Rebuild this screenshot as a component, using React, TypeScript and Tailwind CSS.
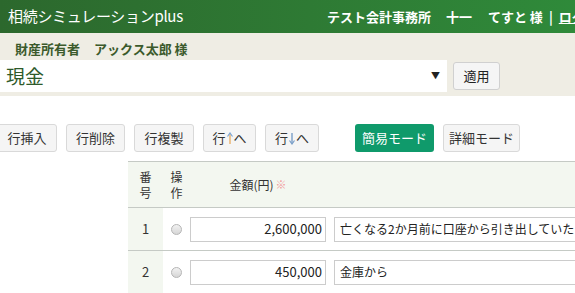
import React from 'react'

const jp = { fontFamily: '"Noto Sans CJK JP", "Noto Sans", sans-serif' }

function ToolButton({ label, w }: { label: React.ReactNode; w: string }) {
  return (
    <button
      className={`h-[28px] ${w} shrink-0 rounded-[3px] border border-[#d9d9d9] bg-[#f5f5f5] text-[13px] text-[#333] flex items-center justify-center`}
    >
      {label}
    </button>
  )
}

function Arrow({ down }: { down?: boolean }) {
  return (
    <svg width="6" height="13" viewBox="0 0 6 13" className="mx-[1px]">
      {down ? (
        <>
          <line x1="3" y1="1" x2="3" y2="11" stroke="#7a9ec8" strokeWidth="1.4" />
          <path d="M0.5 8.5 L3 12 L5.5 8.5" fill="none" stroke="#7a9ec8" strokeWidth="1.2" />
        </>
      ) : (
        <>
          <line x1="3" y1="2" x2="3" y2="12" stroke="#e8b06a" strokeWidth="1.4" />
          <path d="M0.5 4.5 L3 1 L5.5 4.5" fill="none" stroke="#7aa6d8" strokeWidth="1.2" />
        </>
      )}
    </svg>
  )
}

export default function App() {
  const rows = [
    { no: 1, amount: '2,600,000', memo: '亡くなる2か月前に口座から引き出していた' },
    { no: 2, amount: '450,000', memo: '金庫から' },
  ]

  return (
    <div className="w-[575px] h-[293px] overflow-hidden bg-white" style={jp}>
      {/* header */}
      <div className="h-[33px] bg-gradient-to-r from-[#2c682d] to-[#2f8a3a] flex items-center whitespace-nowrap text-white">
        <span className="ml-[8px] text-[15px] tracking-[-0.3px]">相続シミュレーションplus</span>
        <div className="ml-[144px] flex items-center text-[13px] font-bold">
          <span>テスト会計事務所</span>
          <span className="ml-[15px]">十一</span>
          <span className="ml-[16px]">てすと 様</span>
          <span className="ml-[6px]">|</span>
          <span className="ml-[6px] underline">ログアウト</span>
        </div>
      </div>

      {/* owner + select */}
      <div className="bg-[#efede4] pt-[5px] pb-[4px]">
        <div className="h-[21px] flex items-center pl-[15px] text-[13px] font-bold text-[#3b5a2c]">
          <span>財産所有者</span>
          <span className="ml-[14px]">アックス太郎 様</span>
        </div>
        <div className="mt-[1px] flex items-center">
          <div className="w-[447px] h-[32px] bg-white flex items-center pl-[6px] pr-[7px]">
            <span className="text-[19px] text-[#2e5a2a]">現金</span>
            <span className="ml-auto text-[9px] text-[#222]">▼</span>
          </div>
          <button className="ml-[6px] h-[28px] w-[47px] rounded-[3px] border border-[#d0d0d0] bg-[#f5f5f5] text-[13px] text-[#222]">
            適用
          </button>
        </div>
      </div>

      {/* toolbar */}
      <div className="mt-[28px] flex items-center ml-[-3px] gap-[9px]">
        <ToolButton w="w-[60px]" label="行挿入" />
        <ToolButton w="w-[59px]" label="行削除" />
        <ToolButton w="w-[60px]" label="行複製" />
        <ToolButton w="w-[53px]" label={<>行<Arrow />へ</>} />
        <ToolButton w="w-[54px]" label={<>行<Arrow down />へ</>} />
        <button className="ml-[27px] h-[28px] w-[79px] shrink-0 rounded-[3px] bg-[#0f9a6b] text-[13px] text-white">
          簡易モード
        </button>
        <ToolButton w="w-[77px]" label="詳細モード" />
      </div>

      {/* table */}
      <div className="mt-[9px] ml-[128px] w-[447px] border-t border-[#c5cac5]">
        <div className="h-[46px] bg-[#f3f7f0] flex items-center text-[12px] text-[#333] border-b border-[#c5cac5]">
          <div className="w-[35px] shrink-0 flex flex-col items-center leading-[16px]">
            <span>番</span>
            <span>号</span>
          </div>
          <div className="w-[27px] shrink-0 flex flex-col items-center leading-[16px]">
            <span>操</span>
            <span>作</span>
          </div>
          <div className="w-[136px] shrink-0 flex items-center justify-center">
            金額(円)<span className="ml-[2px] text-[#f29a9a] text-[11px]">※</span>
          </div>
        </div>
        {rows.map((r) => (
          <div key={r.no} className="h-[43px] flex items-center border-b border-[#c5cac5]">
            <div className="w-[35px] shrink-0 h-full bg-[#f3f7f0] flex items-center justify-center text-[13px] text-[#333]">
              {r.no}
            </div>
            <div className="w-[27px] shrink-0 flex items-center justify-center">
              <span className="w-[11px] h-[11px] rounded-full border border-[#b5b5b5] bg-gradient-to-b from-[#f2f2f2] to-[#d6d6d6]" />
            </div>
            <div className="w-[136px] shrink-0 h-[25px] border border-[#ccc] bg-white flex items-center justify-end pr-[3px] text-[13px] text-[#222]">
              {r.amount}
            </div>
            <div className="ml-[8px] w-[260px] shrink-0 h-[25px] border border-[#ccc] bg-white flex items-center pl-[5px] text-[12px] text-[#222] whitespace-nowrap">
              {r.memo}
            </div>
          </div>
        ))}
      </div>
    </div>
  )
}
